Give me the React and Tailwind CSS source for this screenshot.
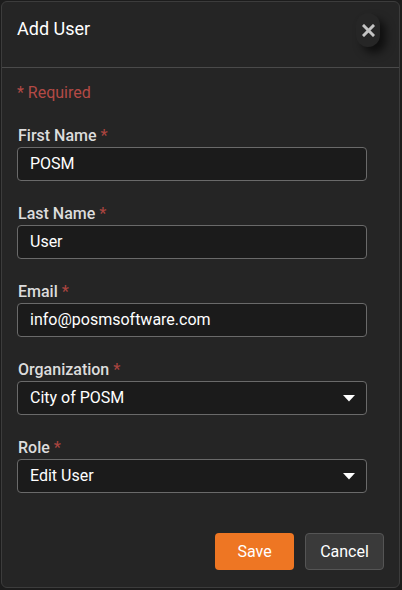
const fields = [
  { label: 'First Name', value: 'POSM' },
  { label: 'Last Name', value: 'User' },
  { label: 'Email', value: 'info@posmsoftware.com' },
  { label: 'Organization', value: 'City of POSM', select: true },
  { label: 'Role', value: 'Edit User', select: true },
]

function Field({ label, value, select }) {
  return (
    <div className="flex flex-col">
      <label className="ml-px text-[16px] leading-[18px] font-medium text-[#dcdcdc] mb-[2px]">
        {label} <span className="text-[#a9443f]">*</span>
      </label>
      <div className="h-[34px] w-[350px] rounded-[4px] border border-[#6a6a6a] bg-[#1b1b1b] flex items-center pl-3 pr-[11px]">
        <span className="flex-1 text-[16px] text-white">{value}</span>
        {select && (
          <svg width="12" height="7" viewBox="0 0 12 7" className="mt-[1px]">
            <polygon points="0,0 12,0 6,6.5" fill="#ffffff" />
          </svg>
        )}
      </div>
    </div>
  )
}

export default function App() {
  return (
    <div className="w-[402px] h-[590px] bg-[#1c1c1c] pl-px pt-px font-['Roboto',sans-serif]">
      <div className="w-[399px] h-[587px] rounded-[6px] border border-[#3c3c3c] bg-[#252525] flex flex-col">
        {/* Header */}
        <div className="h-[66px] border-b border-[#4a4a4a] flex items-start justify-between pl-[15px] pr-[19px] pt-[16px]">
          <h1 className="text-[18px] leading-[22px] text-white">Add User</h1>
          <button className="w-[24px] h-[34px] -mt-[5px] rounded-full bg-[#262626] shadow-[6px_6px_9px_rgba(0,0,0,0.6)] flex items-center justify-center">
            <svg width="13" height="13" viewBox="0 0 13 13">
              <path d="M2 2 L11 11 M11 2 L2 11" stroke="#c4c4c4" strokeWidth="3" strokeLinecap="square" />
            </svg>
          </button>
        </div>

        {/* Body */}
        <div className="px-[15px] pt-[15px] flex flex-col">
          <p className="text-[16px] leading-[20px] text-[#b34a45] mb-[24px]">* Required</p>
          <div className="flex flex-col gap-[24px]">
            {fields.map(f => (
              <Field key={f.label} {...f} />
            ))}
          </div>
        </div>

        {/* Footer */}
        <div className="mt-auto mb-[17px] flex justify-end gap-[11px] pr-[15px]">
          <button className="w-[79px] h-[37px] rounded-[4px] bg-[#ee7623] text-white text-[16px]">Save</button>
          <button className="w-[79px] h-[37px] rounded-[4px] bg-[#3a3a3a] border border-[#555] text-white text-[16px]">Cancel</button>
        </div>
      </div>
    </div>
  )
}
